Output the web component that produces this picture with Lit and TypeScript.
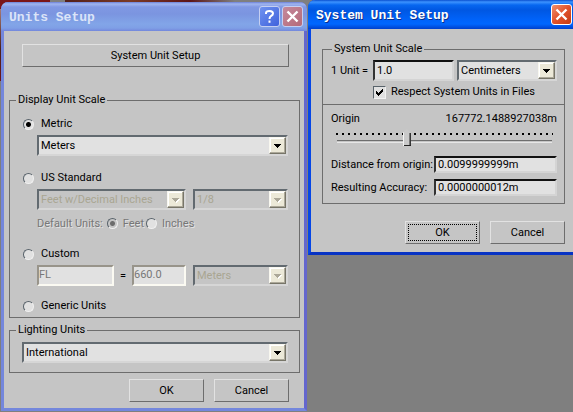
import { LitElement, html, css, svg, nothing } from "lit";
import { customElement, property } from "lit/decorators.js";

const controls = css`
  * { box-sizing: border-box; }
  button, input, select { font: inherit; color: inherit; margin: 0; border-radius: 0; }
  .push {
    height: 23px; padding: 0; background: #c5c5c5; color: #000;
    border: 1px solid; border-color: #e2e2e2 #6d6d6d #6d6d6d #e2e2e2;
  }
  .row { display: flex; align-items: center; }
  .box { border: 1px solid #6d6d6d; margin: 0; padding: 0; min-width: 0; }
  .box legend { margin-left: 6px; padding: 0 2px; height: 14px; line-height: 14px; }
  .field {
    height: 21px; min-width: 0; padding: 0 2px; background: #e1e1e1; outline: none;
    border: 2px solid; border-color: #6d6d6d #e2e2e2 #e2e2e2 #6d6d6d;
  }
  .field.dark { border-color: #111 #d4d4d4 #d4d4d4 #333; }
  .field:disabled { color: #777; border-color: #98948a #fbfaf2 #fbfaf2 #98948a; }
  .actions { display: flex; justify-content: flex-end; gap: 10px; }
  .actions .push { width: 75px; }
`;

@customElement("combo-box")
export class ComboBox extends LitElement {
  @property() value = "";
  @property() label = "";
  @property({ type: Boolean }) disabled = false;
  static styles = css`
    * { box-sizing: border-box; }
    :host { display: block; position: relative; min-width: 0; height: 21px; }
    select {
      appearance: none; width: 100%; height: 21px; margin: 0; padding: 0 20px 0 2px;
      font: inherit; color: #000; background: #e1e1e1; border-radius: 0; outline: none;
      border: 2px solid; border-color: #626a70 #d6d6d6 #d6d6d6 #626a70; text-overflow: clip;
    }
    select:disabled { opacity: 1; color: #a9a592; background: #c5c5c5; }
    .arrow {
      position: absolute; top: 2px; right: 2px; width: 17px; height: 17px; background: #ece9d8;
      border: 1px solid; border-color: #f8f7ef #777568 #777568 #f8f7ef;
      box-shadow: inset -1px -1px #aca899, inset 1px 1px #fff; pointer-events: none;
    }
    svg { display: block; }
  `;
  render() {
    return html`
      <select aria-label=${this.label} ?disabled=${this.disabled}><option>${this.value}</option></select>
      <span class="arrow"><svg width="15" height="15" shape-rendering="crispEdges">
        ${this.disabled ? svg`<path d="M5 7h7v1h-1v1h-1v1h-1v1h-1v-1h-1v-1h-1v-1h-1z" fill="#fff"/>` : nothing}
        <path d="M4 6h7v1h-1v1h-1v1h-1v1h-1v-1h-1v-1h-1v-1h-1z" fill=${this.disabled ? "#aca899" : "#000"} />
      </svg></span>`;
  }
}

@customElement("dialog-window")
export class DialogWindow extends LitElement {
  @property() heading = "";
  @property({ type: Boolean }) help = false;
  @property({ type: Boolean, reflect: true }) inactive = false;
  static styles = css`
    * { box-sizing: border-box; }
    :host {
      display: flex; flex-direction: column; min-width: 0; background: #c5c5c5;
      border: solid #0733c4; border-width: 0 0 3px 3px;
      border-left-color: #0546e6; border-radius: 7px 0 0 0;
    }
    :host([inactive]) {
      border: 3px solid #7487dc; border-top: 0; border-right-color: #6466cd; border-radius: 7px 7px 0 0;
    }
    .bar {
      height: 29px; margin-left: -3px; padding: 0 1px 0 8px; display: flex; align-items: center; gap: 2px;
      border-radius: 7px 0 0 0; color: #fff;
      background: linear-gradient(#0a50d0 0, #3c93ff 2px, #0767f0 5px, #0057e2 10px, #0062f8 19px, #0067ff 24px, #0040cc 29px);
    }
    :host([inactive]) .bar {
      margin-right: -3px; padding-right: 4px; border-radius: 7px 7px 0 0; color: #dbe4f8;
      background: linear-gradient(#6d80d8 0, #a0b5ef 2px, #8098e3 5px, #7b95e0 12px, #82a5e8 22px, #7f9fe6 26px, #7488dc 29px);
    }
    h1 {
      flex: 1; margin: 0; padding-top: 2px; font: bold 13px/20px "Liberation Mono", monospace; white-space: nowrap;
      text-shadow: 1px 1px #0a2f8c;
    }
    :host([inactive]) h1 { text-shadow: none; }
    button {
      width: 21px; height: 21px; padding: 0; border: 1px solid #fff; border-radius: 3px;
      background: linear-gradient(135deg, #f0906f, #e1522b 50%, #c33a12);
    }
    :host([inactive]) button { border-color: #c5cff2; background: linear-gradient(135deg, #c4899c, #b56a79); }
    :host([inactive]) .help { background: linear-gradient(135deg, #6f92f0, #3f62dc); }
    svg { display: block; }
    .content { display: flex; flex-direction: column; flex: 1; }
  `;
  render() {
    return html`
      <header class="bar">
        <h1>${this.heading}</h1>
        ${this.help ? html`<button class="help" aria-label="Help"><svg width="19" height="19" fill="none" stroke="#fff" stroke-width="2">
          <path d="M6 7V6Q6 4 9.500 4Q13 4 13 6.500Q13 8 11 9Q9.500 10 9.500 12M9.500 13.500v2.200"/></svg></button>` : nothing}
        <button aria-label="Close"><svg width="19" height="19" stroke="#fff" stroke-width="2.400"><path d="M4.500 4.500l10 10M14.500 4.500l-10 10"/></svg></button>
      </header>
      <div class="content"><slot></slot></div>`;
  }
}

@customElement("units-dialog")
export class UnitsDialog extends LitElement {
  static styles = [controls, css`
    :host { display: flex; flex-direction: column; padding: 13px 4px 6px 5px; }
    .wide { margin: 0 11px 0 13px; }
    .scale { margin-top: 26px; }
    .options { padding: 6px 11px 0 13px; }
    .choice { height: 22px; gap: 7px; }
    .choice:not(:first-child) { margin-top: 11px; }
    .sub + .choice { margin-top: 6px; }
    .choice:last-child { margin-top: 9px; }
    label, .sub { white-space: nowrap; }
    input[type="radio"] {
      appearance: none; width: 11px; height: 11px; flex: none; border-radius: 50%; background: #e1e1e1;
      border: 1px solid; border-color: #59636b #f0f0f0 #f0f0f0 #59636b;
    }
    input[type="radio"]:checked { background: radial-gradient(circle, #000 0 2px, #e1e1e1 3px); }
    input[type="radio"]:disabled:checked { background: radial-gradient(circle, #6d6d6d 0 2px, #c5c5c5 3px); }
    .indent { margin-left: 14px; }
    .pair { display: grid; grid-template-columns: 149fr 95fr; column-gap: 7px; }
    .custom { display: grid; grid-template-columns: 77fr 18px 54fr; text-align: center; align-items: center; }
    .custom .field { width: 100%; padding: 0 0 2px; }
    .sub { height: 27px; color: #777; text-shadow: 1px 1px #e2e2e2; }
    .sub input { margin: 0 5px 0 4px; }
    .sub label + input { margin-left: 2px; }
    .lighting { margin-top: 5px; }
    .lighting combo-box { margin: 5px 11px 9px 12px; }
    .actions { margin: 6px 11px 0; }
  `];
  render() {
    return html`
      <button class="push wide">System Unit Setup</button>
      <fieldset class="box scale"><legend>Display Unit Scale</legend>
        <div class="options">
          <div class="row choice"><input type="radio" name="scale" id="metric" checked /><label for="metric">Metric</label></div>
          <combo-box class="indent" label="Metric unit" value="Meters"></combo-box>
          <div class="row choice"><input type="radio" name="scale" id="us" /><label for="us">US Standard</label></div>
          <div class="pair indent">
            <combo-box label="US unit" value="Feet w/Decimal Inches" disabled></combo-box>
            <combo-box label="Fraction" value="1/8" disabled></combo-box>
          </div>
          <div class="row sub indent"><span>Default Units:</span>
            <input type="radio" name="default" id="feet" checked disabled /><label for="feet">Feet</label>
            <input type="radio" name="default" id="inches" disabled /><label for="inches">Inches</label>
          </div>
          <div class="row choice"><input type="radio" name="scale" id="custom" /><label for="custom">Custom</label></div>
          <div class="pair indent">
            <div class="custom">
              <input class="field" aria-label="Custom unit name" value="FL" disabled /><span>=</span>
              <input class="field" aria-label="Custom unit size" value="660.0" disabled />
            </div>
            <combo-box label="Custom base unit" value="Meters" disabled></combo-box>
          </div>
          <div class="row choice"><input type="radio" name="scale" id="generic" /><label for="generic">Generic Units</label></div>
        </div>
      </fieldset>
      <fieldset class="box lighting"><legend>Lighting Units</legend>
        <combo-box label="Lighting Units" value="International"></combo-box>
      </fieldset>
      <div class="actions"><button class="push">OK</button><button class="push">Cancel</button></div>`;
  }
}

@customElement("system-dialog")
export class SystemDialog extends LitElement {
  static styles = [controls, css`
    :host { display: flex; flex-direction: column; padding: 13px 8px 8px 11px; }
    label { white-space: nowrap; }
    .box legend { margin-left: 9px; }
    .top { padding: 4px 7px 4px 8px; border-bottom: 1px solid #6d6d6d; }
    .unit { display: grid; grid-template-columns: 39px minmax(0, 81fr) minmax(0, 100fr); column-gap: 3px; align-items: center; }
    .unit .field { width: 100%; }
    .check { margin: 3px 0 0 42px; height: 16px; gap: 5px; }
    .check input {
      appearance: none; width: 13px; height: 13px; background: #e1e1e1;
      border: 1px solid; border-color: #59636b #f0f0f0 #f0f0f0 #59636b;
    }
    .mark { display: grid; }
    .mark > * { grid-area: 1 / 1; }
    .mark svg { width: 13px; height: 13px; pointer-events: none; }
    .bottom { padding: 7px 7px 7px 8px; }
    .origin { justify-content: space-between; height: 14px; }
    .slider {
      appearance: none; display: block; width: calc(100% - 9px); height: 17px; margin: 3px 4px 10px 5px;
      background:
        repeating-linear-gradient(90deg, #000 0 2px, #0000 2px 6px) 0 4px / 100% 2px no-repeat,
        linear-gradient(#6d6d6d 0 1px, #c5c5c5 1px 2px, #e6e6e6 2px) 1px 11px / calc(100% - 2px) 3px no-repeat;
    }
    .slider::-webkit-slider-thumb {
      appearance: none; width: 8px; height: 17px;
      background:
        linear-gradient(#222, #222) 100% 100% / 1px 13px no-repeat,
        linear-gradient(#222, #222) 100% 100% / 7px 1px no-repeat,
        linear-gradient(#777, #777) 6px 4px / 1px 12px no-repeat,
        linear-gradient(90deg, #f2f2f2 1px, #c9c9c9 1px);
      clip-path: polygon(0 4px, 4px 0, 8px 4px, 8px 100%, 0 100%);
    }
    .result { display: grid; grid-template-columns: max-content minmax(0, 1fr); column-gap: 1px; align-items: center; height: 17px; }
    .result label { min-width: 97px; }
    .results { display: grid; grid-template-columns: max-content minmax(0, 1fr); gap: 6px 1px; align-items: center; }
    .results .field { width: 100%; height: 17px; }
    .actions { margin-top: 17px; }
    .default { outline: 1px dotted #000; outline-offset: -4px; }
  `];
  render() {
    return html`
      <fieldset class="box"><legend>System Unit Scale</legend>
        <div class="top">
          <div class="unit"><label for="size">1 Unit =</label>
            <input class="field dark" id="size" value="1.0" />
            <combo-box label="System unit" value="Centimeters"></combo-box></div>
          <div class="row check"><span class="mark"><input type="checkbox" id="respect" checked />
            <svg viewBox="0 0 13 13" shape-rendering="crispEdges"><path d="M3 5h1v1h1v1h1v-1h1v-1h1v-1h1v-1h1v3h-1v1h-1v1h-1v1h-1v1h-1v-1h-1v-1h-1z"/></svg></span>
            <label for="respect">Respect System Units in Files</label></div>
        </div>
        <div class="bottom">
          <div class="row origin"><label for="origin">Origin</label><output for="origin">167772.1488927038m</output></div>
          <input class="slider" type="range" id="origin" min="0" max="100" value="32" />
          <div class="results">
            <label for="distance">Distance from origin:</label><input class="field dark" id="distance" value="0.0099999999m" readonly />
            <label for="accuracy">Resulting Accuracy:</label><input class="field dark" id="accuracy" value="0.0000000012m" readonly />
          </div>
        </div>
      </fieldset>
      <div class="actions"><button class="push default">OK</button><button class="push">Cancel</button></div>`;
  }
}

@customElement("app-root")
export class AppRoot extends LitElement {
  static styles = css`
    :host {
      display: grid; grid-template-columns: minmax(0, 306fr) minmax(0, 265fr); column-gap: 1px; align-items: start;
      min-height: 100vh; padding-left: 1px; box-sizing: border-box;
      background:
        linear-gradient(90deg, #7a1519 0 50px, #7f7f7f 50px 65px, #521f1a 65px, #7a3a26 130px, #5c1417 190px, #7f7f7f 235px) 0 0 / 300px 9px no-repeat,
        linear-gradient(#a87a74, #4a2018 40px, #6b1518 70px) 0 9px / 1px 72px no-repeat,
        #7f7f7f;
      font: 11px/14px Roboto, sans-serif; color: #000;
    }
    .units { margin-top: 2px; }
  `;
  render() {
    return html`
      <dialog-window class="units" heading="Units Setup" help inactive><units-dialog></units-dialog></dialog-window>
      <dialog-window heading="System Unit Setup"><system-dialog></system-dialog></dialog-window>`;
  }
}
